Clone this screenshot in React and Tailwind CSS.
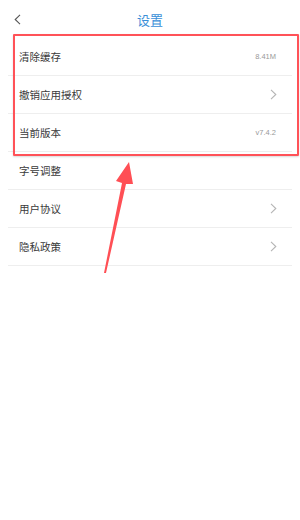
import { useState } from "react";

const rows = [
  { label: "清除缓存", value: "8.41M" },
  { label: "撤销应用授权", arrow: true },
  { label: "当前版本", value: "v7.4.2" },
  { label: "字号调整" },
  { label: "用户协议", arrow: true },
  { label: "隐私政策", arrow: true },
];

const Chevron = ({ left }) => (
  <svg width="7" height="11" viewBox="0 0 7 11" fill="none">
    <path
      d={left ? "M6 0.8 L1.2 5.5 L6 10.2" : "M1 0.8 L5.8 5.5 L1 10.2"}
      stroke={left ? "#555" : "#b5b5b5"}
      strokeWidth="1.1"
    />
  </svg>
);

const App = () => {
  const [items] = useState(rows);

  return (
    <div
      className="relative w-[300px] h-[520px] bg-white overflow-hidden"
      style={{ fontFamily: '"Noto Sans CJK SC", "Noto Sans", sans-serif' }}
    >
      {/* Header */}
      <div className="relative h-[38px] flex items-center justify-center">
        <div className="absolute left-[14px] top-[14px]">
          <Chevron left />
        </div>
        <h1 className="text-[13px] text-[#3a8fd8] leading-none mt-[1px]">设置</h1>
      </div>

      {/* Settings list */}
      <div className="px-2">
        {items.map((row) => (
          <div
            key={row.label}
            className="h-[38px] flex items-center justify-between pl-[11px] pr-[16px] border-b border-[#eeeeee]"
          >
            <span className="text-[10.5px] text-[#3a3a3a]">{row.label}</span>
            {row.value && (
              <span className="text-[7.5px] text-[#999]" style={{ fontFamily: '"Liberation Sans", sans-serif' }}>
                {row.value}
              </span>
            )}
            {row.arrow && (
              <span className="mr-[-1px]">
                <Chevron />
              </span>
            )}
          </div>
        ))}
      </div>

      {/* Annotation: highlight box */}
      <div className="absolute left-[13px] top-[34px] w-[286px] h-[122px] border-2 border-[#ff5258] rounded-[1px] shadow-[0_1px_2px_rgba(0,0,0,0.15)]" />

      {/* Annotation: arrow */}
      <svg className="absolute left-0 top-0" width="300" height="520" viewBox="0 0 300 520">
        <polygon points="104,273 106,273 126,184 133,184 129,162 116,181 122,183" fill="#ff4f55" />
      </svg>
    </div>
  );
};

export default App;
